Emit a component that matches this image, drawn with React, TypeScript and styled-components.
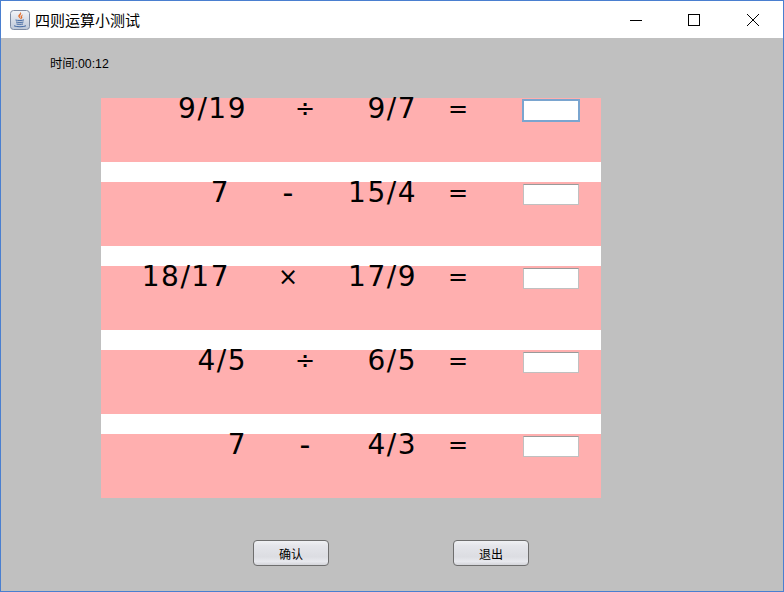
import React from "react";
import styled, { createGlobalStyle } from "styled-components";

const Global = createGlobalStyle`
  html, body { margin: 0; padding: 0; background: #fff; }
  * { box-sizing: border-box; }
`;

const Frame = styled.div`
  width: 784px;
  height: 592px;
  border: 1px solid #4a7fd0;
  display: flex;
  flex-direction: column;
  background: #c0c0c0;
  font-family: "Liberation Sans", "Noto Sans CJK SC", sans-serif;
  overflow: hidden;
`;

const TitleBar = styled.div`
  height: 37px;
  background: #fff;
  display: flex;
  align-items: center;
  padding: 0 1px 0 9px;
  flex: none;
`;

const AppIcon = styled.svg`
  width: 20px;
  height: 20px;
  flex: none;
`;

const Title = styled.div`
  margin-left: 5px;
  font-size: 15px;
  color: #000;
  flex: 1;
  font-family: "Noto Sans CJK SC", sans-serif;
`;

const WinButton = styled.div`
  width: 58.5px;
  height: 37px;
  display: flex;
  align-items: center;
  justify-content: center;
`;

const Content = styled.div`
  flex: 1;
  display: flex;
  flex-direction: column;
  padding-left: 100px;
`;

const Timer = styled.div`
  margin: 18px 0 0 -51px;
  height: 16px;
  line-height: 16px;
  font-size: 12.3px;
  color: #000;
`;

const Panel = styled.div`
  margin-top: 26px;
  width: 500px;
  display: flex;
  flex-direction: column;
  gap: 20px;
  background: #fff;
`;

const Row = styled.div`
  height: 64px;
  background: #ffafaf;
  display: grid;
  grid-template-columns: 250px 66px 82px 1fr;
  font-family: "DejaVu Sans", sans-serif;
  font-size: 28px;
  letter-spacing: 1.5px;
  line-height: 22px;
  color: #000;
`;

const Lead = styled.div<{ $shift: number }>`
  display: flex;
  justify-content: flex-end;
  padding-right: ${(p) => p.$shift}px;
  white-space: pre;
`;

const Operator = styled.span<{ $size: number }>`
  width: 104px;
  padding-left: 12px;
  text-align: center;
  font-size: ${(p) => p.$size}px;
  letter-spacing: 0;
`;

const RightOperand = styled.span`
  display: flex;
  justify-content: flex-end;
  white-space: pre;
`;

const EqualSign = styled.span`
  text-align: center;
  font-size: 24px;
  letter-spacing: 0;
`;

const AnswerCell = styled.div`
  padding: 2px 0 0 24px;
`;

const Answer = styled.input<{ $focus?: boolean }>`
  display: block;
  width: 56px;
  height: 21px;
  padding: 0;
  outline: none;
  background: #fff;
  border: 1px solid ${(p) => (p.$focus ? "#7aa5cf" : "#c0c0c0")};
  border-top-color: ${(p) => (p.$focus ? "#7aa5cf" : "#9a9a9a")};
  box-shadow: ${(p) => (p.$focus ? "0 0 0 1px #7aa5cf" : "none")};
`;

const Actions = styled.div`
  display: flex;
  gap: 124px;
  margin: 42px 0 0 152px;
`;

const Button = styled.button`
  width: 76px;
  height: 26px;
  padding: 0;
  border: 1px solid #6e6e6e;
  border-radius: 4px;
  font-family: "Noto Sans CJK SC", sans-serif;
  font-size: 12px;
  color: #000;
  background: linear-gradient(#f0f1f4 0%, #e4e5ea 20%, #dcdde2 65%, #e8e9ee 85%, #d4d5da 100%);
`;

const rows = [
  { a: "9/19", op: "÷", size: 24, b: "9/7", shift: 0 },
  { a: "7", op: "-", size: 30, b: "15/4", shift: 17 },
  { a: "18/17", op: "×", size: 24, b: "17/9", shift: 17 },
  { a: "4/5", op: "÷", size: 24, b: "6/5", shift: 0 },
  { a: "7", op: "-", size: 30, b: "4/3", shift: 0 },
];

export default function App() {
  return (
    <Frame>
      <Global />
      <TitleBar>
        <AppIcon viewBox="0 0 20 20">
          <defs>
            <linearGradient id="g" x1="0" y1="0" x2="0" y2="1">
              <stop offset="0" stopColor="#f2f4f8" />
              <stop offset="1" stopColor="#bcc7d8" />
            </linearGradient>
          </defs>
          <rect x="0.5" y="0.5" width="19" height="19" rx="3" fill="url(#g)" stroke="#7d8ba3" />
          <path d="M10.5 2.5c1.5 2-1.8 3-.8 5 .3.6.8 1 .8 1-1.6-1-2.5-2-1.6-3.4.6-.9 1.7-1.5 1.6-2.6z" fill="#e0641e" stroke="#e0641e" strokeWidth=".5" />
          <path d="M12.5 5c-1 .7-2 1.2-1.5 2.6.2.5.1 1-.3 1.3 1.4-.5 1.6-1.5 1.1-2.3-.3-.6 0-1 .7-1.6z" fill="#e0641e" stroke="#e0641e" strokeWidth=".5" />
          <path d="M5.5 10c2 .6 7 .6 8.5-.1M6 12c2 .5 6 .5 7.5 0M6.5 14c1.8.4 5 .4 6.5 0" fill="none" stroke="#3f66a0" strokeWidth="1" />
          <path d="M4 15.8c3 1.3 9 1.3 12 0" fill="none" stroke="#3f66a0" strokeWidth="1" />
        </AppIcon>
        <Title>四则运算小测试</Title>
        <WinButton>
          <svg width="12" height="12" viewBox="0 0 12 12"><path d="M0 6.5h12" stroke="#000" strokeWidth="1" /></svg>
        </WinButton>
        <WinButton>
          <svg width="12" height="12" viewBox="0 0 12 12"><rect x="0.5" y="0.5" width="11" height="11" fill="none" stroke="#000" /></svg>
        </WinButton>
        <WinButton>
          <svg width="12" height="12" viewBox="0 0 12 12"><path d="M0 0l12 12M12 0L0 12" stroke="#000" strokeWidth="1" /></svg>
        </WinButton>
      </TitleBar>
      <Content>
        <Timer>时间:00:12</Timer>
        <Panel>
          {rows.map((r, i) => (
            <Row key={i}>
              <Lead $shift={r.shift}>
                <span>{r.a}</span>
                <Operator $size={r.size}>{r.op}</Operator>
              </Lead>
              <RightOperand>{r.b}</RightOperand>
              <EqualSign>=</EqualSign>
              <AnswerCell>
                <Answer $focus={i === 0} />
              </AnswerCell>
            </Row>
          ))}
        </Panel>
        <Actions>
          <Button>确认</Button>
          <Button>退出</Button>
        </Actions>
      </Content>
    </Frame>
  );
}
